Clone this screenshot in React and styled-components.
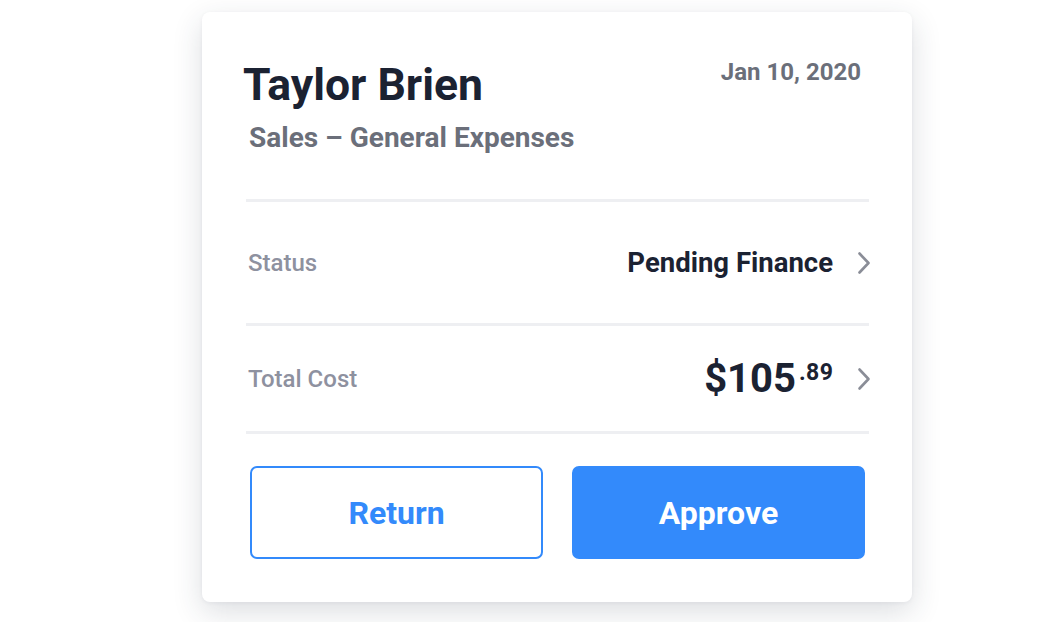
import React from "react";
import styled, { createGlobalStyle } from "styled-components";

const GlobalStyle = createGlobalStyle`
  html, body {
    margin: 0;
    padding: 0;
    background: #ffffff;
  }
  body {
    font-family: Roboto, "Liberation Sans", sans-serif;
  }
`;

const Page = styled.div`
  padding: 12px 0 20px 202px;
`;

const Card = styled.div`
  box-sizing: border-box;
  width: 710px;
  padding: 51px 43px 43px 44px;
  background: #ffffff;
  border-radius: 8px;
  box-shadow: 0px 10px 30px rgba(40, 48, 70, 0.16), 0px 1px 4px rgba(40, 48, 70, 0.05);
`;

const Header = styled.div`
  display: flex;
  justify-content: space-between;
  align-items: flex-start;
  padding-bottom: 47px;
`;

const Name = styled.h1`
  margin: 0 0 17px -3px;
  font-size: 44.5px;
  line-height: 44px;
  font-weight: 700;
  color: #1b2232;
`;

const Department = styled.h2`
  margin: 0 0 0 3px;
  font-size: 28px;
  line-height: 28px;
  font-weight: 700;
  color: #6b6f7a;
`;

const DateText = styled.span`
  margin: -3px 8px 0 0;
  font-size: 24px;
  line-height: 24px;
  font-weight: 700;
  color: #6b6f7a;
`;

const Divider = styled.hr`
  margin: 0;
  border: none;
  height: 3px;
  background: #eeeff2;
`;

const Row = styled.div`
  display: flex;
  align-items: center;
  justify-content: space-between;
  height: ${(p) => p.height}px;
  padding-left: 2px;
`;

const Label = styled.span`
  font-size: 24px;
  font-weight: 500;
  color: #8e919f;
`;

const Value = styled.div`
  display: flex;
  align-items: center;
  gap: 24px;
  margin-right: -2px;
`;

const StatusText = styled.span`
  font-size: 27.5px;
  font-weight: 700;
  color: #1b2232;
`;

const Amount = styled.span`
  display: flex;
  align-items: flex-start;
  font-weight: 700;
  color: #1b2232;
`;

const Dollars = styled.span`
  font-size: 40px;
  line-height: 40px;
`;

const Cents = styled.span`
  font-size: 23px;
  line-height: 23px;
  margin: 2px -0.5px 0 3px;
  letter-spacing: 0.5px;
`;

const Chevron = () => (
  <svg width="14" height="24" viewBox="0 0 14 24" fill="none">
    <path
      d="M2.5 2.5 L11.5 12 L2.5 21.5"
      stroke="#8a8d97"
      strokeWidth="2.6"
      strokeLinecap="round"
      strokeLinejoin="round"
    />
  </svg>
);

const Actions = styled.div`
  display: grid;
  grid-template-columns: 1fr 1fr;
  gap: 29px;
  padding: 32px 4px 0 4px;
`;

const Button = styled.button`
  box-sizing: border-box;
  height: 93px;
  border-radius: 7px;
  font-family: Roboto, "Liberation Sans", sans-serif;
  font-size: 32px;
  font-weight: 700;
  cursor: pointer;
  border: 2px solid #338afb;
  background: ${(p) => (p.primary ? "#338afb" : "#ffffff")};
  color: ${(p) => (p.primary ? "#ffffff" : "#338afb")};
`;

export default function App() {
  return (
    <>
      <GlobalStyle />
      <Page>
        <Card>
          <Header>
            <div>
              <Name>Taylor Brien</Name>
              <Department>Sales – General Expenses</Department>
            </div>
            <DateText>Jan 10, 2020</DateText>
          </Header>
          <Divider />
          <Row height={121}>
            <Label>Status</Label>
            <Value>
              <StatusText>Pending Finance</StatusText>
              <Chevron />
            </Value>
          </Row>
          <Divider />
          <Row height={105}>
            <Label>Total Cost</Label>
            <Value>
              <Amount>
                <Dollars>$105</Dollars>
                <Cents>.89</Cents>
              </Amount>
              <Chevron />
            </Value>
          </Row>
          <Divider />
          <Actions>
            <Button>Return</Button>
            <Button primary>Approve</Button>
          </Actions>
        </Card>
      </Page>
    </>
  );
}
